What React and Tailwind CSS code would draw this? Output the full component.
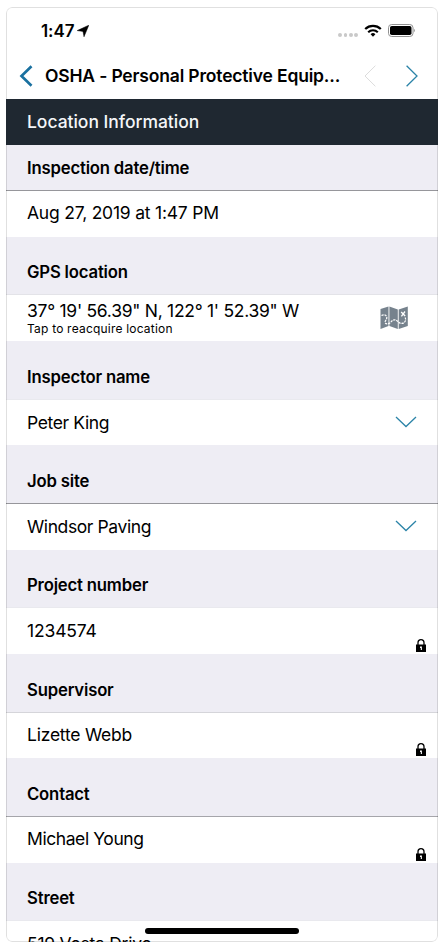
import React from "react";

const fields = [
  { label: "Inspection date/time", value: "Aug 27, 2019 at 1:47 PM", head: "h-[46px] border-[#96969b]", row: "h-[46px] pt-[11px]", valueCls: "tracking-[-0.22px]" },
  { label: "GPS location", value: "37° 19' 56.39\" N, 122° 1' 52.39\" W", note: "Tap to reacquire location", icon: "map", head: "h-[58px] border-[#e3e3e8]", row: "h-[46px] pt-[5px]", valueCls: "tracking-[-0.28px]" },
  { label: "Inspector name", value: "Peter King", icon: "down", head: "h-[59px] border-[#e9e9ee]", row: "h-[45px] pt-[12px]", valueCls: "tracking-[-0.38px]" },
  { label: "Job site", value: "Windsor Paving", icon: "down", head: "h-[59px] border-[#96969b]", row: "h-[46px] pt-[12px]", valueCls: "tracking-[-0.4px]" },
  { label: "Project number", value: "1234574", icon: "lock", head: "h-[58px] border-[#e9e9ee]", row: "h-[46px] pt-[12px]", valueCls: "tracking-[-0.15px]" },
  { label: "Supervisor", value: "Lizette Webb", icon: "lock", head: "h-[59px] border-[#d5d5da]", row: "h-[45px] pt-[11px]", valueCls: "tracking-[-0.22px]" },
  { label: "Contact", value: "Michael Young", icon: "lock", head: "h-[59px] border-[#a5a5aa]", row: "h-[46px] pt-[11px]", valueCls: "tracking-[-0.42px]" },
  { label: "Street", value: "519 Vesta Drive", head: "h-[58px] border-[#e9e9ee]", row: "h-[46px] pt-[12px]", valueCls: "tracking-[-0.25px]" },
];

function MapIcon() {
  return (
    <svg className="mt-[6px] mr-[30px] h-[24px] w-[28px]" viewBox="0 0 28 24" fill="none">
      <path d="M.5 3 8.5.5v19.6L.5 23ZM9.4.5l8.4 3.1V23l-8.4-2.9ZM18.7 3.6 27.8.5v19.6L18.7 23Z" fill="#76828d" />
      <path d="M1.5 9.5C4 8.2 6.8 9 6.8 11.8c0 2-2 2.7-1.7 4.6.3 1.8 3 2 5 .3 1.8-1.6 3-3.3 5.2-2.8 2.5.6 3.5 4 6.8 3.5 3.4-.4 4.6-4.4 2.4-6.8" stroke="#fff" strokeWidth="1.2" strokeDasharray="2.2 .9" />
      <path d="m21.2 6 4 4M25 5.5l-3.6 4.8" stroke="#fff" strokeWidth="1.3" />
    </svg>
  );
}

function LockIcon() {
  return (
    <svg className="mr-[12px] mb-[2px] h-[13px] w-[10px] self-end" viewBox="0 0 10 13" fill="none">
      <path d="M2 6V3.7a3 3 0 0 1 6 0V6" stroke="#000" strokeWidth="1.3" />
      <path d="M0 5.5h10V13H0z" fill="#000" />
      <path d="M4 7.6h1.9v3.4H4.8V9.1H4z" fill="#fff" />
    </svg>
  );
}

function DownIcon() {
  return (
    <svg className="mt-[4px] mr-[21px] h-[12px] w-[22px]" viewBox="0 0 22 12" fill="none">
      <path d="m1 1 10 9.5L21 1" stroke="#2c84a8" strokeWidth="1.3" />
    </svg>
  );
}

function Field({ field }) {
  return (
    <section>
      <div className={`flex items-end border-b bg-[#eeedf4] pb-[11px] pl-[21px] ${field.head}`}>
        <h2 className="text-[16.7px] leading-[22px] font-semibold tracking-[-0.18px]">{field.label}</h2>
      </div>
      <div className={`flex justify-between bg-white pl-[21px] ${field.row}`}>
        <div>
          <p className={`text-[17.5px] leading-[22px] whitespace-nowrap ${field.valueCls}`}>{field.value}</p>
          {field.note && <p className="mt-[-1px] text-[12px] leading-[15px] tracking-[0.2px]">{field.note}</p>}
        </div>
        {field.icon === "map" && <MapIcon />}
        {field.icon === "down" && <DownIcon />}
        {field.icon === "lock" && <LockIcon />}
      </div>
    </section>
  );
}

function StatusBar() {
  return (
    <div className="flex h-[46px] items-center pl-[35px] pr-[23px]">
      <span className="text-[17px] leading-5 font-semibold tracking-[-0.1px]">1:47</span>
      <svg className="mt-[-1px] ml-[3px] h-3 w-3" viewBox="0 0 12 12">
        <path d="M11.8.2 7 11.8 6 6.4.2 5.6Z" fill="#000" stroke="#000" strokeWidth=".5" strokeLinejoin="round" />
      </svg>
      <div className="mt-2 ml-auto flex gap-[1.5px]">
        <span className="size-[3.8px] rounded-full bg-[#c9c9c9]" />
        <span className="size-[3.8px] rounded-full bg-[#c9c9c9]" />
        <span className="size-[3.8px] rounded-full bg-[#c9c9c9]" />
        <span className="size-[3.8px] rounded-full bg-[#c9c9c9]" />
      </div>
      <svg className="mt-[-2px] ml-[6px] h-[13px] w-[18px]" viewBox="0 0 18 13" fill="none" stroke="#000">
        <path d="M1.2 5a11.2 11.2 0 0 1 15.6 0" strokeWidth="2.3" />
        <path d="M4.2 8.2a6.8 6.8 0 0 1 9.6 0" strokeWidth="2.1" />
        <path d="M9 12.7 6.6 10.3a3.4 3.4 0 0 1 4.8 0Z" fill="#000" stroke="none" />
      </svg>
      <svg className="mt-[-1px] ml-[6px] h-[13px] w-[27px]" viewBox="0 0 27 13" fill="none">
        <rect x=".5" y=".5" width="24.5" height="12" rx="3.2" stroke="#929292" />
        <rect x="2" y="2" width="21.5" height="9" rx="1.8" fill="#000" />
        <path d="M25.9 4.5q1.5 2 0 4Z" fill="#777" />
      </svg>
    </div>
  );
}

function NavBar() {
  return (
    <div className="flex h-[45px] items-center pb-px pl-[13px]">
      <svg className="h-[24px] w-[15px]" viewBox="0 0 15 24" fill="none">
        <path d="M12.5 2.2 2.5 12l10 9.8" stroke="#1a71a0" strokeWidth="2.7" />
      </svg>
      <h1 className="ml-[11px] w-[300px] text-[17.5px] leading-6 font-semibold tracking-[-0.17px] whitespace-nowrap">
        OSHA - Personal Protective Equip...
      </h1>
      <svg className="ml-[19px] h-[22px] w-[12px]" viewBox="0 0 12 22" fill="none">
        <path d="M11.4.7 1 11l10.4 10.3" stroke="#dcdcdc" />
      </svg>
      <svg className="ml-[30px] h-[22px] w-[12px]" viewBox="0 0 12 22" fill="none">
        <path d="M.6.7 11 11 .6 21.3" stroke="#2c84a8" strokeWidth="1.3" />
      </svg>
    </div>
  );
}

export default function App() {
  return (
    <div className="h-[950px] w-[444px] overflow-hidden bg-white pt-[7px] pl-[6px] font-['Inter',sans-serif] text-black">
      <main className="relative h-[935px] w-[432px] overflow-hidden rounded-[6px] bg-white pt-px">
        <StatusBar />
        <NavBar />
        <div className="relative z-10 flex h-[46px] items-center bg-[#1f2831] pl-[21px] text-[17.5px] font-medium tracking-[-0.03px] text-[#f4f6f8]">
          Location Information
        </div>
        {fields.map((field) => (
          <Field key={field.label} field={field} />
        ))}
        <div className="absolute bottom-[8px] left-[139px] h-[6px] w-[154px] rounded-full bg-black" />
        {/* card outline sits over the rows but under the dark title bar */}
        <div className="pointer-events-none absolute inset-0 rounded-[6px] border border-black/12" />
      </main>
    </div>
  );
}
